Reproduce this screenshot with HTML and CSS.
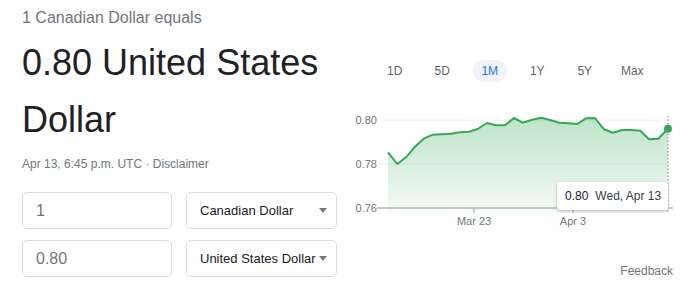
FILE: index.html
```html
<!DOCTYPE html>
<html>
<head>
<meta charset="utf-8">
<link rel="stylesheet" href="styles.css">
</head>
<body>
<div class="page">
  <div class="left">
    <div class="subtitle">1 Canadian Dollar equals</div>
    <div class="headline">0.80 United States Dollar</div>
    <div class="date">Apr 13, 6:45 p.m. UTC · <span class="disc">Disclaimer</span></div>
    <div class="converter">
      <div class="field">1</div>
      <div class="select"><span>Canadian Dollar</span><span class="arrow"></span></div>
      <div class="field">0.80</div>
      <div class="select"><span>United States Dollar</span><span class="arrow"></span></div>
    </div>
  </div>
  <div class="right">
    <div class="ranges">
      <div class="range"><span class="pill">1D</span></div>
      <div class="range"><span class="pill">5D</span></div>
      <div class="range"><span class="pill active">1M</span></div>
      <div class="range"><span class="pill">1Y</span></div>
      <div class="range"><span class="pill">5Y</span></div>
      <div class="range"><span class="pill">Max</span></div>
    </div>
    <div class="chart">
      <svg class="chart-svg" width="328" height="140" viewBox="345 95 328 140">
        <defs>
          <linearGradient id="fillg" x1="0" y1="0" x2="0" y2="1">
            <stop offset="0" stop-color="#34a853" stop-opacity="0.32"/>
            <stop offset="1" stop-color="#34a853" stop-opacity="0.05"/>
          </linearGradient>
        </defs>
        <line x1="378" y1="120" x2="673" y2="120" stroke="#eeeeee" stroke-width="1"/>
        <line x1="378" y1="164" x2="673" y2="164" stroke="#eeeeee" stroke-width="1"/>
        <polygon fill="url(#fillg)" points="388,213 388,152.3 397.3,164 406,157.3 415,146.7 424.3,138.3 432.7,134.7 441.7,134.3 451,133.7 460,132.3 469,131.7 477.7,129 487,123 495.7,125.3 505,125.3 514,118 522.7,122.7 532.3,119.7 541.3,117.7 550,120 559.3,122.7 568.3,123.3 577.3,124 586,118.3 595,118 604,129.3 613,132.7 622,130 631,130 640.3,130.7 649,139.3 658.3,138.7 668,128.7 668,213"/>
        <line x1="668" y1="116" x2="668" y2="213" stroke="#80868b" stroke-width="1" stroke-dasharray="1.5 2"/>
        <line x1="377" y1="208" x2="673" y2="208" stroke="#b3b6ba" stroke-width="1.5"/>
        <line x1="474" y1="208" x2="474" y2="213" stroke="#9aa0a6" stroke-width="1"/>
        <line x1="573" y1="208" x2="573" y2="213" stroke="#9aa0a6" stroke-width="1"/>
        <polyline fill="none" stroke="#34a853" stroke-width="2" stroke-linejoin="round" points="388,152.3 397.3,164 406,157.3 415,146.7 424.3,138.3 432.7,134.7 441.7,134.3 451,133.7 460,132.3 469,131.7 477.7,129 487,123 495.7,125.3 505,125.3 514,118 522.7,122.7 532.3,119.7 541.3,117.7 550,120 559.3,122.7 568.3,123.3 577.3,124 586,118.3 595,118 604,129.3 613,132.7 622,130 631,130 640.3,130.7 649,139.3 658.3,138.7 668,128.7"/>
        <circle cx="668" cy="128.7" r="4" fill="#34a853"/>
        <text class="ylab" x="377" y="124" text-anchor="end">0.80</text>
        <text class="ylab" x="377" y="168" text-anchor="end">0.78</text>
        <text class="ylab" x="377" y="212" text-anchor="end">0.76</text>
        <text class="xlab" x="474" y="225" text-anchor="middle">Mar 23</text>
        <text class="xlab" x="573" y="225" text-anchor="middle">Apr 3</text>
      </svg>
      <div class="tooltip"><span class="tval">0.80</span><span class="tdate">Wed, Apr 13</span></div>
    </div>
    <div class="feedback">Feedback</div>
  </div>
</div>
</body>
</html>
```

FILE: styles.css
```css
* { box-sizing: border-box; }
html, body { margin: 0; background: #fff; }
body { font-family: "Liberation Sans", Arial, sans-serif; color: #202124; }

.page {
  display: flex;
  gap: 8px;
  padding: 8px 22px 0 22px;
  width: 695px;
}

.left { width: 315px; flex: none; }
.right { width: 328px; flex: none; }

.subtitle {
  font-size: 16px;
  line-height: 20px;
  color: #70757a;
}

.headline {
  margin-top: 6px;
  font-size: 36px;
  line-height: 57px;
  color: #202124;
}

.date {
  margin-top: 8px;
  font-size: 12px;
  line-height: 16px;
  color: #70757a;
}

.converter {
  margin-top: 20px;
  display: grid;
  grid-template-columns: 150px 151px;
  column-gap: 14px;
  row-gap: 11px;
}

.field, .select {
  height: 37px;
  border: 1px solid #dadce0;
  border-radius: 5px;
  display: flex;
  align-items: center;
}

.field {
  padding-left: 13px;
  font-size: 16px;
  color: #70757a;
}

.select {
  padding-left: 13px;
  padding-right: 9px;
  font-size: 13px;
  color: #202124;
  justify-content: space-between;
}

.arrow {
  width: 0;
  height: 0;
  border-left: 4.5px solid transparent;
  border-right: 4.5px solid transparent;
  border-top: 5px solid #777;
  flex: none;
}

.ranges {
  margin-top: 52px;
  margin-left: 26px;
  display: grid;
  grid-template-columns: repeat(6, 47.5px);
  height: 22px;
}

.range { display: flex; justify-content: center; }

.pill {
  display: block;
  width: 34px;
  height: 22px;
  line-height: 22px;
  border-radius: 11px;
  text-align: center;
  font-size: 12px;
  color: #5f6368;
}

.pill.active {
  background: #f0f4f9;
  color: #1a73e8;
}

.chart {
  position: relative;
  margin-top: 13px;
  height: 140px;
}

.chart-svg { display: block; }

.ylab, .xlab {
  font-family: "Liberation Sans", Arial, sans-serif;
  font-size: 11px;
  fill: #70757a;
}

.tooltip {
  position: absolute;
  left: 212px;
  top: 87px;
  width: 111px;
  height: 28px;
  background: #fff;
  border-radius: 3px;
  box-shadow: 0 1px 3px rgba(0,0,0,0.28);
  padding-left: 8px;
  font-size: 12px;
  line-height: 28px;
  white-space: nowrap;
}

.tval { color: #202124; margin-right: 7px; }
.tdate { color: #3c4043; }

.feedback {
  margin-top: 28px;
  text-align: right;
  font-size: 12px;
  line-height: 16px;
  color: #70757a;
}
```
